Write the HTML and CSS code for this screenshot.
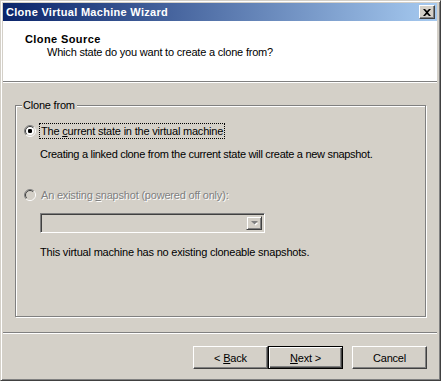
FILE: index.html
```html
<!DOCTYPE html>
<html lang="en">
<head>
<meta charset="UTF-8" />
<title>Clone Virtual Machine Wizard</title>
<link rel="stylesheet" href="styles.css">
</head>
<body>
  <div class="window">

    <!-- title bar -->
    <div class="titlebar">
      <span class="title">Clone Virtual Machine Wizard</span>
      <button class="closeBtn">
        <svg width="8" height="7" viewBox="0 0 8 7"><path d="M0 0h2l2 2 2-2h2L5 3.5 8 7H6L4 5 2 7H0l3-3.5z" fill="#000"/></svg>
      </button>
    </div>

    <!-- header -->
    <div class="header">
      <div class="headTitle">Clone Source</div>
      <div class="headSub">Which state do you want to create a clone from?</div>
    </div>

    <!-- page -->
    <div class="page">
      <div class="group">
        <span class="legend">Clone from</span>

        <div class="row">
          <svg class="radio" width="12" height="12" viewBox="0 0 12 12">
            <circle cx="6" cy="6" r="4.5" fill="#fff"/>
            <path d="M2.1 9.9A5.5 5.5 0 0 1 9.9 2.1" fill="none" stroke="#808080"/>
            <path d="M9.9 2.1A5.5 5.5 0 0 1 2.1 9.9" fill="none" stroke="#fff"/>
            <path d="M2.8 9.2A4.5 4.5 0 0 1 9.2 2.8" fill="none" stroke="#404040"/>
            <path d="M9.2 2.8A4.5 4.5 0 0 1 2.8 9.2" fill="none" stroke="#d4d0c8"/>
            <rect x="4" y="4" width="4" height="4" rx="1.2" fill="#000"/>
          </svg>
          <span class="label focus">The <u>c</u>urrent state in the virtual machine</span>
        </div>
        <p class="desc">Creating a linked clone from the current state will create a new snapshot.</p>

        <div class="row row2">
          <svg class="radio" width="12" height="12" viewBox="0 0 12 12">
            <circle cx="6" cy="6" r="4.5" fill="#d4d0c8"/>
            <path d="M2.1 9.9A5.5 5.5 0 0 1 9.9 2.1" fill="none" stroke="#808080"/>
            <path d="M9.9 2.1A5.5 5.5 0 0 1 2.1 9.9" fill="none" stroke="#fff"/>
            <path d="M2.8 9.2A4.5 4.5 0 0 1 9.2 2.8" fill="none" stroke="#404040"/>
            <path d="M9.2 2.8A4.5 4.5 0 0 1 2.8 9.2" fill="none" stroke="#d4d0c8"/>
          </svg>
          <span class="label disabled">An existing <u>s</u>napshot (powered off only):</span>
        </div>

        <div class="combo">
          <div class="comboBtn">
            <svg width="7" height="5" viewBox="0 0 7 5"><path d="M1 1h5L3.5 3.5z" fill="#fff" transform="translate(1 1)"/><path d="M0 0h7L3.5 3.5z" fill="#808080"/></svg>
          </div>
        </div>

        <p class="note">This virtual machine has no existing cloneable snapshots.</p>
      </div>

      <div class="sep"></div>

      <div class="buttons">
        <button class="btn">&lt; <u>B</u>ack</button>
        <button class="btn default"><u>N</u>ext &gt;</button>
        <button class="btn cancel">Cancel</button>
      </div>
    </div>
  </div>
</body>
</html>
```

FILE: styles.css
```css
/* reset */
* {
  margin: 0; padding: 0; box-sizing: border-box;
}

body {
  font-family: "Liberation Sans", Arial, sans-serif;
  font-size: 11px;
  letter-spacing: -0.2px;
  color: #000;
  background: #d4d0c8;
}

/* window frame */
.window {
  width: 441px;
  height: 381px;
  background: #d4d0c8;
  border: 1px solid;
  border-color: #d4d0c8 #404040 #404040 #d4d0c8;
  box-shadow: inset 1px 1px #fff, inset -1px -1px #808080;
  padding: 2px 3px 2px 2px;
  display: flex;
  flex-direction: column;
}

/* title bar */
.titlebar {
  height: 18px;
  background: linear-gradient(to right, #0a246a, #a6caf0);
  display: flex;
  align-items: center;
  padding: 0 2px 0 3px;
}
.title {
  flex: 1;
  color: #fff;
  font-weight: 700;
  letter-spacing: 0.3px;
  line-height: 14px;
}
.closeBtn {
  width: 16px;
  height: 14px;
  background: #d4d0c8;
  border: 1px solid;
  border-color: #fff #404040 #404040 #fff;
  box-shadow: inset -1px -1px #808080;
  display: flex;
  align-items: center;
  justify-content: center;
}

/* header */
.header {
  height: 61px;
  background: #fff;
  border-bottom: 1px solid #808080;
  box-shadow: 0 1px #fff;
  padding: 12px 0 0 22px;
  line-height: 13px;
}
.headTitle {
  font-weight: 700;
  letter-spacing: 0.4px;
}
.headSub {
  margin-left: 22px;
}

/* page */
.page {
  flex: 1;
  margin-top: 1px;
  padding: 22px 0 0 0;
  display: flex;
  flex-direction: column;
}

.group {
  position: relative;
  height: 212px;
  margin: 0 11px 0 12px;
  border: 1px solid #808080;
  box-shadow: inset 1px 1px #fff, 1px 1px #fff;
  padding: 17px 0 0 8px;
}
.legend {
  position: absolute;
  top: -7px;
  left: 6px;
  background: #d4d0c8;
  padding: 0 2px 0 1px;
  line-height: 13px;
}

.row {
  display: flex;
  align-items: center;
  gap: 3px;
  height: 16px;
}
.label {
  line-height: 14px;
  padding: 0 1px;
  border: 1px solid transparent;
}
.focus {
  border: 1px dotted #000;
}
.disabled {
  color: #808080;
  text-shadow: 1px 1px #fff;
}
.desc {
  margin: 9px 0 0 16px;
  line-height: 13px;
  letter-spacing: -0.3px;
}
.row2 {
  margin-top: 26px;
}

/* combo box */
.combo {
  width: 225px;
  height: 20px;
  margin: 10px 0 0 16px;
  border: 1px solid;
  border-color: #808080 #fff #fff #808080;
  box-shadow: inset 1px 1px #404040, inset -1px -1px #d4d0c8;
  display: flex;
  justify-content: flex-end;
  padding: 2px;
}
.comboBtn {
  width: 16px;
  height: 14px;
  background: #d4d0c8;
  border: 1px solid;
  border-color: #d4d0c8 #404040 #404040 #d4d0c8;
  box-shadow: inset 1px 1px #fff, inset -1px -1px #808080;
  display: flex;
  align-items: center;
  justify-content: center;
}

.note {
  margin: 13px 0 0 16px;
  line-height: 13px;
}

/* bottom */
.sep {
  margin-top: 15px;
  height: 2px;
  border-top: 1px solid #808080;
  border-bottom: 1px solid #fff;
}

.buttons {
  display: flex;
  justify-content: flex-end;
  padding: 12px 10px 0 0;
}
.btn {
  width: 75px;
  height: 23px;
  font-family: inherit;
  font-size: 11px;
  letter-spacing: -0.2px;
  color: #000;
  background: #d4d0c8;
  border: 1px solid;
  border-color: #fff #404040 #404040 #fff;
  box-shadow: inset -1px -1px #808080;
}
.default {
  border-color: #000;
  box-shadow: inset 1px 1px #fff, inset -1px -1px #404040, inset -2px -2px #808080;
}
.cancel {
  margin-left: 9px;
}
```
